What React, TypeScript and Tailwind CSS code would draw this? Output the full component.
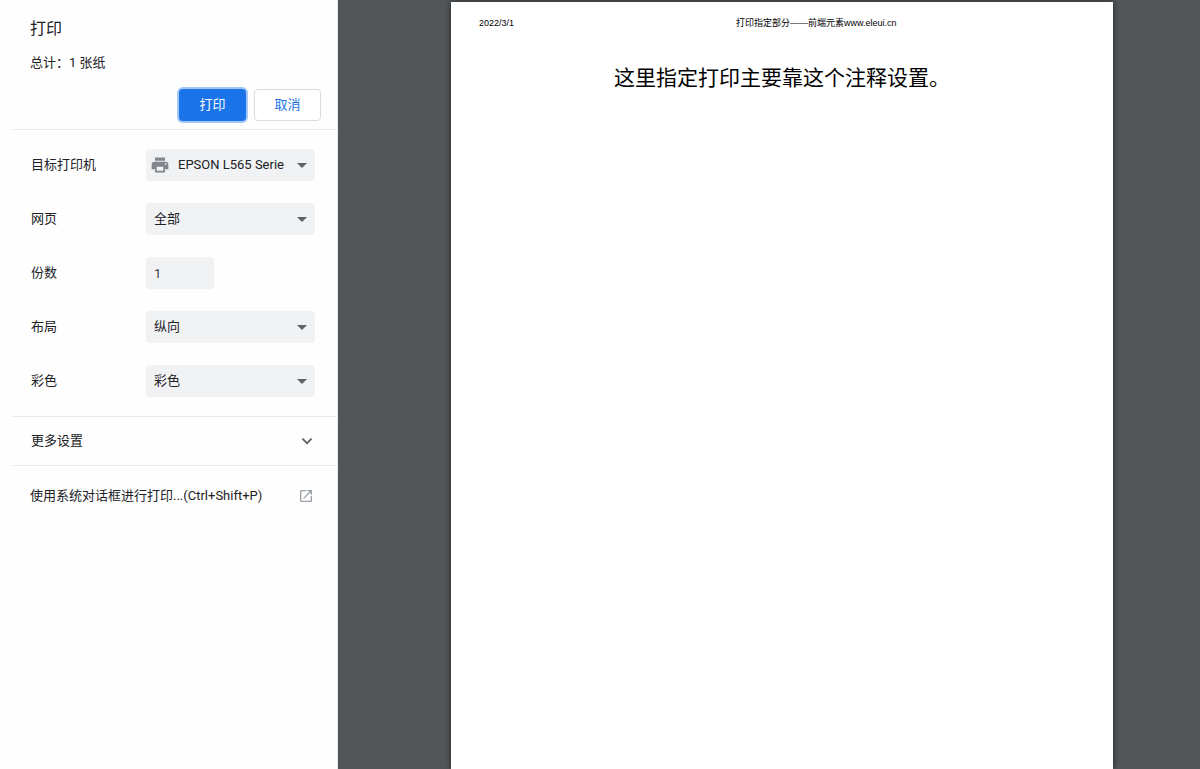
import React from 'react';

interface SettingRowProps {
  id: string;
  label: string;
  children: React.ReactNode;
}

interface SelectFieldProps {
  id: string;
  options: string[];
  icon?: React.ReactNode;
}

function PrinterIcon() {
  return (
    <svg viewBox="0 0 24 24" className="w-5 h-5" fill="#80868b" aria-hidden="true">
      <path d="M19 8H5c-1.66 0-3 1.34-3 3v6h4v4h12v-4h4v-6c0-1.66-1.34-3-3-3zm-3 11H8v-5h8v5zm3-7c-.55 0-1-.45-1-1s.45-1 1-1 1 .45 1 1-.45 1-1 1zm-1-9H6v4h12V3z" />
    </svg>
  );
}

function ArrowIcon() {
  return (
    <svg viewBox="0 0 10 5" className="w-[10px] h-[5px]" fill="#5f6368" aria-hidden="true">
      <path d="M0 0h10L5 5z" />
    </svg>
  );
}

function ChevronIcon() {
  return (
    <svg viewBox="0 0 16 16" className="w-4 h-4" fill="none" stroke="#5f6368" strokeWidth="1.8" aria-hidden="true">
      <path d="M3.4 5.6L8 10.2l4.6-4.6" />
    </svg>
  );
}

function OpenInNewIcon() {
  return (
    <svg viewBox="0 0 24 24" className="w-4 h-4" fill="#9aa0a6" aria-hidden="true">
      <path d="M19 19H5V5h7V3H5c-1.11 0-2 .9-2 2v14c0 1.1.89 2 2 2h14c1.1 0 2-.9 2-2v-7h-2v7zM14 3v2h3.59l-9.83 9.83 1.41 1.41L19 6.41V10h2V3h-7z" />
    </svg>
  );
}

function SettingRow({ id, label, children }: SettingRowProps) {
  return (
    <div className="flex items-center h-8">
      <label htmlFor={id} className="w-[115px] shrink-0">
        {label}
      </label>
      {children}
    </div>
  );
}

function SelectField({ id, options, icon }: SelectFieldProps) {
  return (
    <div className="relative flex-1 min-w-0">
      {icon && (
        <span className="absolute left-1 inset-y-0 flex items-center pointer-events-none">{icon}</span>
      )}
      <select
        id={id}
        className={`block w-full h-8 rounded bg-[#f1f2f4] appearance-none pr-[31px] ${icon ? 'pl-8' : 'pl-2'}`}
      >
        {options.map((option) => (
          <option key={option}>{option}</option>
        ))}
      </select>
      <span className="absolute right-2 inset-y-0 flex items-center pointer-events-none">
        <ArrowIcon />
      </span>
    </div>
  );
}

function Sidebar() {
  return (
    <aside className="w-[338px] shrink-0 pl-3 bg-[#fefefe] text-[13px] leading-5 text-[#202124] border-r border-[#e8eaed]">
      <header className="pl-[18px] pr-4 pt-[17px] pb-2 border-b border-[#e8eaed]">
        <h1 className="text-base leading-6">打印</h1>
        <p className="mt-3">总计：1 张纸</p>
        <div className="flex justify-end gap-2 mt-4">
          <button
            type="button"
            className="w-[67px] h-8 rounded bg-[#1a73e8] text-white ring-2 ring-[#a3c7f7]"
          >
            打印
          </button>
          <button
            type="button"
            className="w-[67px] h-8 rounded border border-[#dadce0] bg-white text-[#1a73e8]"
          >
            取消
          </button>
        </div>
      </header>

      <section className="flex flex-col gap-[22px] pl-[19px] pr-[22px] py-[19px] border-b border-[#e8eaed]">
        <SettingRow id="destination" label="目标打印机">
          <SelectField
            id="destination"
            options={['EPSON L565 Series', '另存为 PDF']}
            icon={<PrinterIcon />}
          />
        </SettingRow>
        <SettingRow id="pages" label="网页">
          <SelectField id="pages" options={['全部', '自定义']} />
        </SettingRow>
        <SettingRow id="copies" label="份数">
          <input
            id="copies"
            type="text"
            inputMode="numeric"
            defaultValue="1"
            className="w-[68px] h-8 px-2 rounded bg-[#f1f2f4] text-[#3c4043]"
          />
        </SettingRow>
        <SettingRow id="layout" label="布局">
          <SelectField id="layout" options={['纵向', '横向']} />
        </SettingRow>
        <SettingRow id="color" label="彩色">
          <SelectField id="color" options={['彩色', '黑白']} />
        </SettingRow>
      </section>

      <button
        type="button"
        aria-expanded="false"
        className="flex items-center justify-between w-full h-[49px] pl-[19px] pr-[22px] border-b border-[#e8eaed]"
      >
        更多设置
        <ChevronIcon />
      </button>

      <a href="#system-dialog" className="flex items-center justify-between h-[60px] pl-[18px] pr-[23px]">
        使用系统对话框进行打印...(Ctrl+Shift+P)
        <OpenInNewIcon />
      </a>
    </aside>
  );
}

function Preview() {
  return (
    <main className="flex flex-1 min-w-0 pt-[2px] pl-[113px] pr-[87px] bg-[#525659] overflow-hidden">
      <article className="flex-1 bg-white text-black shadow-[0_0_6px_rgba(0,0,0,0.6)] font-['Liberation_Sans','Noto_Sans_CJK_SC',sans-serif]">
        <header className="flex pl-7 pt-[15px] text-[9px] leading-3">
          <span className="w-[257px] shrink-0">2022/3/1</span>
          <span className="whitespace-nowrap">打印指定部分——前端元素www.eleui.cn</span>
        </header>
        <h2 className="mt-[33px] text-center text-[21px] leading-8">
          这里指定打印主要靠这个注释设置。
        </h2>
      </article>
    </main>
  );
}

export default function App() {
  return (
    <div className="flex min-h-screen font-[Roboto,'Noto_Sans_CJK_SC',sans-serif]">
      <Sidebar />
      <Preview />
    </div>
  );
}
